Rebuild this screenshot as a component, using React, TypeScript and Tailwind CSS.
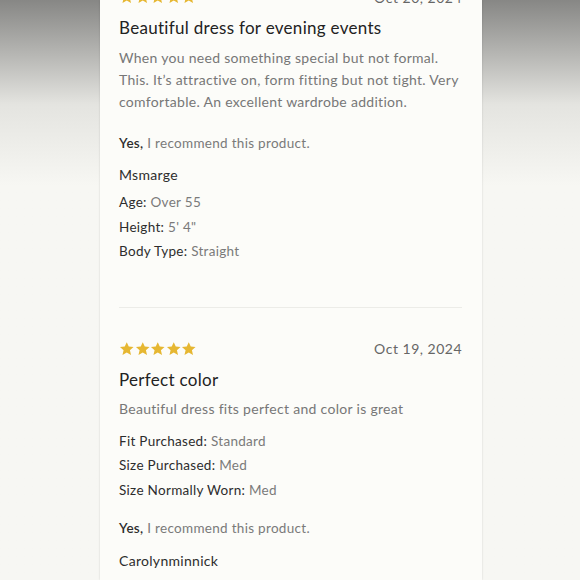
const font = { fontFamily: 'Lato, "Noto Sans", sans-serif' };

function Stars() {
  return (
    <div className="flex">
      {[0, 1, 2, 3, 4].map((i) => (
        <svg key={i} viewBox="0 0 24 24" className="w-[15.5px] h-[15.5px]">
          <path
            d="M12 1.8l3.1 6.9 7.4.7-5.6 5 1.7 7.4L12 17.9l-6.6 3.9 1.7-7.4-5.6-5 7.4-.7z"
            fill="#e6b732"
          />
        </svg>
      ))}
    </div>
  );
}

function Detail({ label, value }: { label: string; value: string }) {
  return (
    <div className="text-[13.5px] leading-[24.5px] tracking-[0.3px]">
      <span className="text-[#2d2d2d]">{label}</span>{' '}
      <span className="text-[#7a7a7a]">{value}</span>
    </div>
  );
}

function Recommend() {
  return (
    <div className="text-[13.5px] tracking-[0.3px]">
      <span className="text-[#2d2d2d] font-semibold">Yes,</span>
      <span className="text-[#7a7a7a]"> I recommend this product.</span>
    </div>
  );
}

export default function App() {
  return (
    <div
      className="w-[580px] h-[580px] overflow-hidden bg-linear-to-b from-[#878785] via-[#e4e4e0] via-18% to-[#f7f7f3] to-32%"
      style={font}
    >
      <div className="ml-[100px] w-[382px] h-full overflow-hidden bg-[#fcfcf9] shadow-[0_0_2px_rgba(0,0,0,0.15)] pl-[19px] pr-[20px]">
        {/* first review, scrolled past its header */}
        <div className="flex justify-between items-center -mt-[11px] h-[16px]">
          <Stars />
          <span className="text-[14px] text-[#666] tracking-[0.5px]">Oct 20, 2024</span>
        </div>
        <h2 className="mt-[11px] text-[17px] leading-[24px] text-[#222] tracking-[0.3px]">
          Beautiful dress for evening events
        </h2>
        <p className="mt-[7px] text-[14px] leading-[22px] text-[#777] tracking-[0.3px]">
          When you need something special but not formal. This. It’s attractive on, form fitting but not tight. Very
          comfortable. An excellent wardrobe addition.
        </p>
        <div className="mt-[20px]">
          <Recommend />
        </div>
        <div className="mt-[11px] text-[14px] text-[#2d2d2d] tracking-[0.3px]">Msmarge</div>
        <div className="mt-[5px]">
          <Detail label="Age:" value="Over 55" />
          <Detail label="Height:" value={'5\' 4"'} />
          <Detail label="Body Type:" value="Straight" />
        </div>

        <div className="mt-[43px] border-t border-[#ecece8]" />

        {/* second review */}
        <div className="mt-[30px] flex justify-between items-center">
          <Stars />
          <span className="text-[14px] text-[#666] tracking-[0.5px]">Oct 19, 2024</span>
        </div>
        <h2 className="mt-[9px] text-[17px] leading-[24px] text-[#222] tracking-[0.3px]">Perfect color</h2>
        <p className="mt-[6px] text-[14px] leading-[22px] text-[#777] tracking-[0.3px]">
          Beautiful dress fits perfect and color is great
        </p>
        <div className="mt-[9px]">
          <Detail label="Fit Purchased:" value="Standard" />
          <Detail label="Size Purchased:" value="Med" />
          <Detail label="Size Normally Worn:" value="Med" />
        </div>
        <div className="mt-[16px]">
          <Recommend />
        </div>
        <div className="mt-[11px] text-[14px] text-[#2d2d2d] tracking-[0.3px]">Carolynminnick</div>
        <div className="mt-[6px]">
          <Detail label="Age:" value="35-44" />
        </div>
      </div>
    </div>
  );
}
